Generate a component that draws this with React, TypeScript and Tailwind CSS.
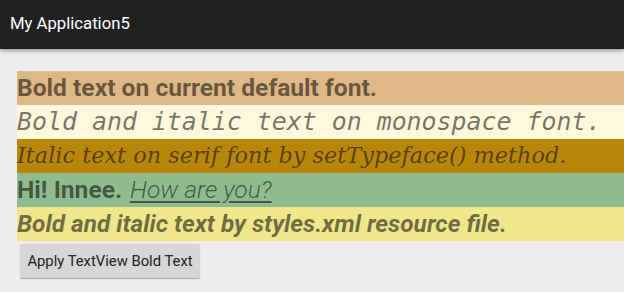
export default function App() {
  const txt = "text-[rgba(0,0,0,0.54)]";
  return (
    <div className="w-[624px] h-[292px] bg-[#eeeeee] overflow-hidden relative" style={{ fontFamily: "Roboto, sans-serif" }}>
      <div className="h-[49px] bg-[#212121] flex items-center pl-[10px] shadow-[0_2px_4px_rgba(0,0,0,0.35)] relative z-10">
        <span className="text-white text-[16.7px] leading-none" style={{ fontFamily: "Roboto, sans-serif" }}>My Application5</span>
      </div>
      <div className="pl-[17px] pt-[22px] flex flex-col">
        <div className={`h-[34px] bg-[#deb887] flex items-center font-bold text-[24.6px] whitespace-nowrap ${txt}`}>
          Bold text on current default font.
        </div>
        <div className={`h-[34px] bg-[#fff8dc] flex items-center italic text-[24.9px] whitespace-nowrap ${txt}`} style={{ fontFamily: "'DejaVu Sans Mono', monospace" }}>
          Bold and italic text on monospace font.
        </div>
        <div className={`h-[34px] bg-[#b8860b] flex items-center italic text-[22.4px] whitespace-nowrap ${txt}`} style={{ fontFamily: "'DejaVu Serif', serif" }}>
          Italic text on serif font by setTypeface() method.
        </div>
        <div className={`h-[34px] bg-[#8fbc8f] flex items-center text-[24.6px] whitespace-nowrap ${txt}`}>
          <span className="font-bold">Hi! Innee.</span>
          <span className="ml-[8px] italic font-light underline underline-offset-[3px]">How are you?</span>
        </div>
        <div className={`h-[34px] bg-[#f0e68c] flex items-center italic font-bold text-[24.4px] whitespace-nowrap ${txt}`}>
          Bold and italic text by styles.xml resource file.
        </div>
        <div className="pt-[3px] pl-[3px]">
          <button className="w-[180px] h-[34px] bg-[#d6d6d6] text-[#222] text-[14.8px] shadow-[0_1px_1px_rgba(0,0,0,0.3)] rounded-[2px]" style={{ fontFamily: "Roboto, sans-serif" }}>
            Apply TextView Bold Text
          </button>
        </div>
      </div>
    </div>
  );
}
